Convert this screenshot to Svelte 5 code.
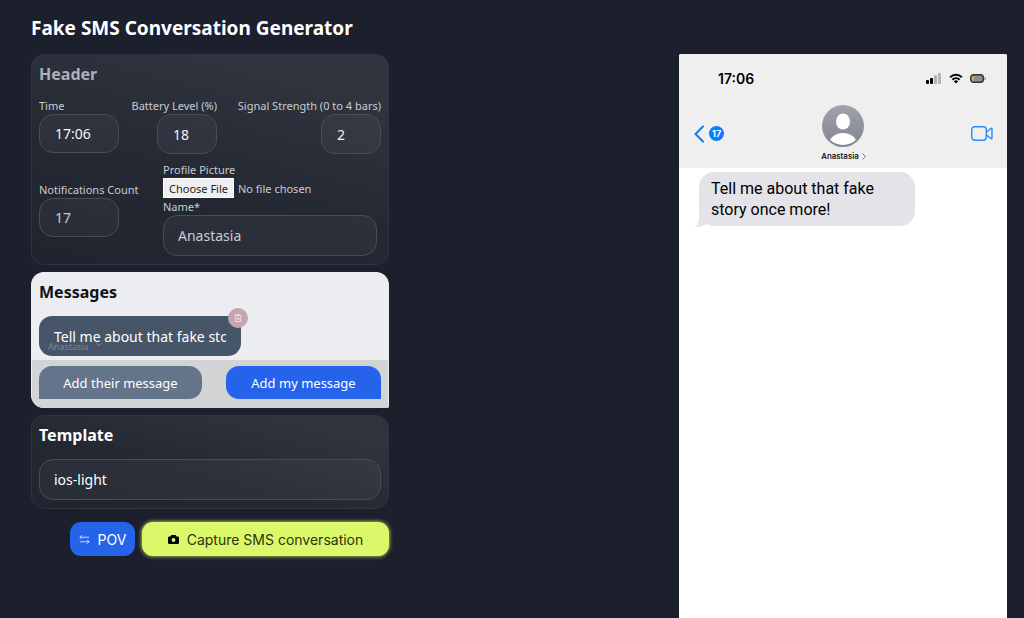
<script lang="ts">
  let time = $state("17:06");
  let battery = $state("18");
  let signal = $state("2");
  let notifications = $state("17");
  let name = $state("Anastasia");
  let template = $state("ios-light");
  let messages = $state([
    { text: "Tell me about that fake story once more!", mine: false },
  ]);

  const add = (mine: boolean) => {
    messages.push({ text: "", mine });
  };

  const remove = (index: number) => {
    messages.splice(index, 1);
  };

  const swap = () => {
    messages.forEach((m) => (m.mine = !m.mine));
  };
</script>

<main>
  <div class="editor">
    <h1>Fake SMS Conversation Generator</h1>

    <section class="panel header">
      <h2>Header</h2>
      <div class="fields">
        <div class="field">
          <label for="time">Time</label>
          <input id="time" class="box medium" bind:value={time} />
        </div>
        <div class="field end">
          <label for="battery">Battery Level (%)</label>
          <input id="battery" class="box small" bind:value={battery} />
        </div>
        <div class="field end">
          <label for="signal">Signal Strength (0 to 4 bars)</label>
          <input id="signal" class="box small" bind:value={signal} />
        </div>
      </div>
      <div class="contact">
        <div class="field">
          <label for="notifications">Notifications Count</label>
          <input id="notifications" class="box medium" bind:value={notifications} />
        </div>
        <div class="field">
          <label for="picture">Profile Picture</label>
          <input id="picture" type="file" />
          <label for="name">Name*</label>
          <input id="name" class="box" bind:value={name} />
        </div>
      </div>
    </section>

    <section class="panel messages">
      <h2>Messages</h2>
      <div class="list">
        {#each messages as message, i}
          <div class="message" class:mine={message.mine}>
            <input aria-label="Message" bind:value={message.text} />
            <select class="sender" aria-label="Sender">
              <option>{name}</option>
            </select>
            <svg class="chevron" viewBox="0 0 8 5"><path d="M1 1l3 3 3-3" /></svg>
            <button class="delete" aria-label="Delete message" onclick={() => remove(i)}>
              <svg viewBox="0 0 10 10">
                <path d="M1.5 2.5h7M3.5 2.5v-1h3v1M2.3 2.5v6h5.4v-6M4.1 4.2v2.8M5.9 4.2v2.8" />
              </svg>
            </button>
          </div>
        {/each}
      </div>
      <div class="actions">
        <button class="theirs" onclick={() => add(false)}>Add their message</button>
        <button class="ours" onclick={() => add(true)}>Add my message</button>
      </div>
    </section>

    <section class="panel">
      <h2><label for="template">Template</label></h2>
      <select id="template" class="box" bind:value={template}>
        <option>ios-light</option>
        <option>ios-dark</option>
      </select>
    </section>

    <div class="export">
      <button class="pov" onclick={swap}>
        <svg viewBox="0 0 12 12">
          <path d="M1 3.5h10M3.2 1.3L1 3.5l2.2 2.2M1 8.5h10M8.8 6.3L11 8.5l-2.2 2.2" />
        </svg>
        POV
      </button>
      <button class="capture">
        <svg viewBox="0 0 12 12">
          <path
            fill-rule="evenodd"
            d="M3.6 1h4.8l.9 1.6h1.2A1.5 1.5 0 0 1 12 4.1v5.4a1.5 1.5 0 0 1-1.5 1.5h-9A1.5 1.5 0 0 1 0 9.5V4.1a1.5 1.5 0 0 1 1.5-1.5h1.2zM6 4.4a2.1 2.1 0 1 0 0 4.2 2.1 2.1 0 0 0 0-4.2z"
          />
        </svg>
        Capture SMS conversation
      </button>
    </div>
  </div>

  <div class="phone">
    <header>
      <div class="status">
        <span class="clock">{time}</span>
        <svg class="signal" viewBox="0 0 16 11">
          {#each [4, 6, 9, 11] as height, i}
            <rect
              x={i * 4}
              y={11 - height}
              width="3"
              {height}
              rx="1"
              fill={i < Number(signal) ? "#000" : "#b4b4b6"}
            />
          {/each}
        </svg>
        <svg class="wifi" viewBox="0 0 14 11">
          <path d="M1.2 4.2a8.3 8.3 0 0 1 11.6 0" />
          <path d="M3.4 6.7a5.2 5.2 0 0 1 7.2 0" />
          <path class="dot" d="M4.9 8.4a3 3 0 0 1 4.2 0L7 10.6z" />
        </svg>
        <svg class="battery" viewBox="0 0 17 9">
          <rect x="0.7" y="0.7" width="12.6" height="7.6" rx="2.8" fill="#8e8e90" stroke="#333" stroke-width="1.4" />
          <rect x="1.8" y="1.9" width="2" height="5.2" rx="1" fill="#dda84b" />
          <path d="M15.2 3v3" stroke="#999" stroke-width="1.4" />
        </svg>
      </div>
      <div class="nav">
        <div class="back">
          <svg viewBox="0 0 10 18"><path d="M9 1.5L1.5 9 9 16.5" /></svg>
          <span>{notifications}</span>
        </div>
        <div class="person">
          <svg class="avatar" viewBox="0 0 42 42">
            <defs>
              <linearGradient id="avatar" x2="0" y2="1">
                <stop stop-color="#a0a2ac" />
                <stop offset="1" stop-color="#84868e" />
              </linearGradient>
              <clipPath id="round"><circle cx="21" cy="21" r="19" /></clipPath>
            </defs>
            <circle cx="21" cy="21" r="21" fill="url(#avatar)" />
            <ellipse cx="21" cy="16.5" rx="7" ry="8" fill="#fff" />
            <ellipse cx="21" cy="38" rx="13.5" ry="10" fill="#fff" clip-path="url(#round)" />
          </svg>
          <span class="name">
            {name}
            <svg viewBox="0 0 4 7"><path d="M0.5 0.5l3 3-3 3" /></svg>
          </span>
        </div>
        <svg class="video" viewBox="0 0 22 15">
          <rect x="0.7" y="0.7" width="14.6" height="13.6" rx="3" />
          <path d="M15.5 6l4.3-3.5q1.2-.8 1.2.5v9q0 1.3-1.2.5L15.5 9" />
        </svg>
      </div>
    </header>
    <div class="chat">
      {#each messages as message}
        <p class="bubble" class:mine={message.mine}>
          {message.text}
          <svg viewBox="0 0 12 12"><path d="M4 0v4q0 5-4 7.5 6 1 12-2.5V0z" /></svg>
        </p>
      {/each}
    </div>
  </div>
</main>

<style>
  :global(body) {
    margin: 0;
    background-color: #1c1f2c;
  }

  * {
    box-sizing: border-box;
  }

  main {
    display: flex;
    justify-content: space-between;
    gap: 24px;
    min-height: 100vh;
    padding: 0 17px 0 31px;
    color: #fff;
    font-family: "Noto Sans", "Open Sans", sans-serif;
  }

  h1,
  h2,
  p {
    margin: 0;
  }

  h1 {
    padding: 12px 0 10px;
    font-size: 19px;
    line-height: 32px;
  }

  h2 {
    margin-bottom: 12px;
    font-size: 16px;
    line-height: 24px;
  }

  button,
  input,
  select {
    font-family: inherit;
    color: inherit;
  }

  button {
    display: flex;
    align-items: center;
    justify-content: center;
    padding: 0;
    border: 0;
    cursor: pointer;
  }

  svg {
    display: block;
    flex: none;
    fill: none;
  }

  .editor {
    width: 358px;
  }

  .panel {
    margin-bottom: 7px;
    padding: 7px 7px 8px;
    border: 1px solid #2f333e;
    border-radius: 13px;
    background: linear-gradient(15deg, #20242f, #232833 40%, #30343f 85%);
  }

  .header {
    color: #c9ccd2;
  }

  .header h2 {
    color: #adb0b9;
  }

  .fields {
    display: grid;
    grid-template-columns: 80px 98px 1fr;
    margin-bottom: 8px;
  }

  .field {
    display: flex;
    flex-direction: column;
    align-items: flex-start;
    font-size: 11px;
    line-height: 16px;
    white-space: nowrap;
  }

  .end {
    align-items: flex-end;
  }

  .contact {
    display: grid;
    grid-template-columns: 100px 1fr;
    align-items: center;
    gap: 24px;
    padding-right: 4px;
  }

  .box {
    appearance: none;
    width: 100%;
    height: 40px;
    padding: 0 15px;
    border: 1px solid #484c57;
    border-radius: 14px;
    background-color: rgba(255, 255, 255, 0.04);
    font-size: 15px;
  }

  #name,
  #template {
    height: 41px;
    padding: 0 14px;
    font-size: 14px;
  }

  .fields .box {
    color: #f3f4f6;
  }

  .medium {
    width: 80px;
    height: 39px;
    font-size: 14px;
  }

  .small {
    width: 60px;
    font-size: 14px;
  }

  input[type="file"] {
    width: 100%;
    height: 21px;
    font-size: 11px;
  }

  input::file-selector-button {
    height: 20px;
    margin: 0 4px 0 0;
    padding: 0 5px;
    border: 1px solid #fff;
    background-color: #efefef;
    color: #222;
    font-family: inherit;
    font-size: 11px;
  }

  .messages {
    padding: 7px 0 0;
    border-color: #ecedf0;
    border-bottom: 0;
    border-bottom-right-radius: 2px;
    background: #ecedf0;
    overflow: hidden;
  }

  .messages h2 {
    padding: 0 7px;
    color: #111217;
  }

  .list {
    display: flex;
    flex-direction: column;
    gap: 8px;
    padding: 0 7px 4px;
  }

  .message {
    position: relative;
    width: 202px;
    height: 40px;
    border-radius: 13px;
    background-color: #475569;
  }

  .message.mine {
    align-self: flex-end;
    background-color: #2563eb;
  }

  .message input {
    width: 100%;
    height: 40px;
    padding: 0 15px;
    border: 0;
    background: none;
    font-size: 14px;
  }

  .sender {
    position: absolute;
    bottom: 3px;
    left: 9px;
    appearance: none;
    padding: 0;
    border: 0;
    background: none;
    color: #7d8898;
    font-size: 9px;
    line-height: 12px;
  }

  .chevron {
    position: absolute;
    bottom: 9px;
    left: 56px;
    width: 8px;
    stroke: #7d8898;
  }

  .delete {
    position: absolute;
    top: -8px;
    right: -7px;
    width: 20px;
    height: 20px;
    border-radius: 50%;
    background-color: #c5a5ae;
  }

  .delete svg {
    width: 10px;
    stroke: #eadde1;
  }

  .actions {
    display: flex;
    justify-content: space-between;
    gap: 24px;
    padding: 6px 7px 9px;
    background-color: #d2d3d5;
  }

  .actions button {
    height: 33px;
    border-radius: 13px;
    font-size: 13px;
  }

  .actions .theirs {
    flex: 163;
    border-bottom-left-radius: 0;
    background-color: #64748b;
  }

  .actions .ours {
    flex: 155;
    border-bottom-right-radius: 0;
    background-color: #2563eb;
  }

  .export {
    display: flex;
    justify-content: flex-end;
    gap: 7px;
    padding-top: 6px;
    font-family: Inter, sans-serif;
  }

  .export button {
    height: 34px;
    border-radius: 11px;
    font-size: 14px;
  }

  .export svg {
    width: 11px;
  }

  .pov {
    gap: 8px;
    width: 65px;
    background-color: #2563eb;
  }

  .pov svg {
    stroke: #dce6ff;
  }

  .export .capture {
    gap: 8px;
    width: 247px;
    background-color: #daf86a;
    box-shadow: 0 0 4px #daf86a;
    color: #2c3312;
  }

  .capture svg {
    fill: #000;
  }

  .phone {
    width: 328px;
    margin-top: 54px;
    border-radius: 2px 2px 0 0;
    background-color: #fff;
    color: #000;
    font-family: Inter, sans-serif;
    overflow: hidden;
  }

  .phone header {
    padding: 14px 14px 6px 15px;
    background-color: #efeff0;
  }

  .status {
    display: flex;
    align-items: center;
    gap: 7px;
    height: 20px;
    padding: 0 6px 0 24px;
  }

  .clock {
    margin-right: auto;
    font-size: 14px;
    font-weight: 600;
  }

  .signal {
    width: 16px;
  }

  .wifi {
    width: 14px;
    stroke: #000;
    stroke-width: 2;
  }

  .wifi .dot {
    fill: #000;
    stroke: none;
  }

  .battery {
    width: 17px;
  }

  .nav {
    display: grid;
    grid-template-columns: 1fr auto 1fr;
    align-items: center;
    padding-top: 17px;
  }

  .back {
    display: flex;
    align-items: center;
    gap: 5px;
  }

  .back svg {
    width: 10px;
    stroke: #0a7cff;
    stroke-width: 2;
    stroke-linecap: round;
  }

  .back span {
    padding: 0 3px;
    border-radius: 8px;
    background-color: #0a7cff;
    color: #fff;
    font-size: 9px;
    font-weight: 700;
    line-height: 15px;
  }

  .person {
    display: flex;
    flex-direction: column;
    align-items: center;
  }

  .avatar {
    width: 42px;
  }

  .name {
    display: flex;
    align-items: center;
    gap: 3px;
    padding-top: 3px;
    font-size: 8px;
    font-weight: 500;
    line-height: 12px;
  }

  .name svg {
    width: 4px;
    stroke: #777;
  }

  .video {
    justify-self: end;
    width: 22px;
    stroke: #2b8cf5;
    stroke-width: 1.4;
  }

  .chat {
    display: flex;
    flex-direction: column;
    gap: 8px;
    padding: 4px 20px;
  }

  .bubble {
    position: relative;
    align-self: flex-start;
    width: 216px;
    padding: 6px 12px;
    border-radius: 15px;
    background-color: #e4e4e8;
    font-family: Roboto, sans-serif;
    font-size: 16px;
    line-height: 21px;
  }

  .bubble.mine {
    align-self: flex-end;
    background-color: #0a7cff;
    color: #fff;
  }

  .bubble svg {
    position: absolute;
    bottom: -1px;
    left: -4px;
    width: 12px;
    fill: #e4e4e8;
  }

  .bubble.mine svg {
    display: none;
  }
</style>
